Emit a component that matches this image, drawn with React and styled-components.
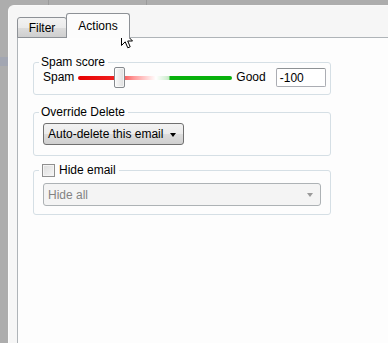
import React from 'react';
import styled, { createGlobalStyle } from 'styled-components';

/* Global */

const GlobalStyle = createGlobalStyle`
  html, body {
    margin: 0;
    padding: 0;
    background: #adadad;
  }
  body {
    font-family: "Liberation Sans", Arial, sans-serif;
    font-size: 12px;
    color: #000;
  }
`

/* Styled Components */

const Screen = styled.div`
  position: relative;
  width: 388px;
  height: 343px;
  overflow: hidden;
  box-sizing: border-box;
  padding: 5px 0 0 8px;
  background:
    linear-gradient(#a2a6b2, #a2a6b2) 0 57px / 8px 9px no-repeat,
    linear-gradient(#9a9a9a, #9a9a9a) 48px 0 / 1px 5px no-repeat,
    linear-gradient(#9a9a9a, #9a9a9a) 146px 0 / 1px 5px no-repeat,
    #adadad;
`

const Window = styled.div`
  height: 100%;
  box-sizing: border-box;
  background: #f6f6f6;
  border-top-left-radius: 6px;
  border-left: 1px solid #fbfbfb;
  border-top: 1px solid #f9f9f9;
  padding: 8px 0 0 8px;
  display: flex;
  flex-direction: column;
`

const TabStrip = styled.div`
  display: flex;
  align-items: flex-end;
  height: 24px;
  position: relative;
  z-index: 1;
  margin-bottom: -1px;
`

const Tab = styled.div`
  box-sizing: border-box;
  height: ${p => (p.$active ? '25px' : '21px')};
  width: ${p => p.$width}px;
  margin-left: ${p => (p.$active ? '-1px' : '0')};
  border: 1px solid #8d9196;
  border-bottom: ${p => (p.$active ? 'none' : '1px solid #8d9196')};
  border-radius: 3px 3px 0 0;
  background: ${p =>
    p.$active
      ? '#fcfcfc'
      : 'linear-gradient(#f3f3f3, #ebebeb 50%, #dddddd 51%, #cfcfcf)'};
  display: flex;
  align-items: center;
  justify-content: center;
  padding-top: ${p => (p.$active ? '0' : '1px')};
`

const TabBody = styled.div`
  flex: 1;
  background: #fdfdfd;
  border-top: 1px solid #afb4b8;
  border-left: 1px solid #afb4b8;
  padding: 17px 0 0 15px;
  display: flex;
  flex-direction: column;
`

const Group = styled.fieldset`
  box-sizing: border-box;
  width: 298px;
  margin: ${p => p.$top || 0}px 0 0 0;
  padding: 0 9px ${p => p.$bottom}px 9px;
  border: 1px solid #d5dfe5;
  border-radius: 3px;
  min-width: 0;
`

const Legend = styled.legend`
  margin-left: -4px;
  padding: 0 3px 0 2px;
  line-height: 14px;
  height: 14px;
  display: flex;
  align-items: center;
  gap: 4px;
`

const SliderRow = styled.div`
  display: flex;
  align-items: center;
  height: 21px;
  margin-top: -2px;
  margin-right: -6px;
`

const RowLabel = styled.span`
  flex-shrink: 0;
  margin-left: ${p => p.$left || 0}px;
  margin-right: ${p => p.$right || 0}px;
  padding-bottom: 1px;
`

const Slider = styled.div`
  position: relative;
  flex-shrink: 0;
  width: 154px;
  height: 21px;
  display: flex;
  align-items: center;
`

const Track = styled.div`
  width: 100%;
  height: 4px;
  border-radius: 2px;
  background: linear-gradient(
    to right,
    #e60000 0px,
    #f02020 36px,
    #ff9a9a 56px,
    #fff 78px,
    #d6f0d6 88px,
    #c3e8c3 91px,
    #08b00c 92px,
    #08b00c 154px
  );
`

const Thumb = styled.div`
  position: absolute;
  top: 0;
  width: 11px;
  height: 21px;
  box-sizing: border-box;
  border: 1px solid #868a8e;
  border-radius: 2px;
  background: linear-gradient(to right, #fafafa, #ececec 50%, #dedede);
  box-shadow: inset 0 0 0 1px #ffffff99;
`

const ScoreInput = styled.div`
  flex-shrink: 0;
  width: 50px;
  height: 19px;
  box-sizing: border-box;
  border: 1px solid #abadb3;
  border-top-color: #8e9194;
  border-radius: 2px;
  background: #fff;
  padding: 0 3px;
  display: flex;
  align-items: center;
`

const Combo = styled.div`
  box-sizing: border-box;
  width: ${p => p.$width}px;
  height: ${p => p.$height}px;
  margin-top: ${p => p.$top}px;
  border: 1px solid ${p => (p.$disabled ? '#adb2b5' : '#707070')};
  border-radius: 3px;
  background: ${p =>
    p.$disabled
      ? '#f4f4f4'
      : 'linear-gradient(#f2f2f2, #ebebeb 50%, #dddddd 51%, #cfcfcf)'};
  color: ${p => (p.$disabled ? '#838383' : '#000')};
  display: flex;
  align-items: center;
  justify-content: space-between;
  padding: 0 7px 0 4px;
`

const Arrow = styled.span`
  width: 0;
  height: 0;
  border-left: 3.5px solid transparent;
  border-right: 3.5px solid transparent;
  border-top: 4px solid ${p => (p.$disabled ? '#9a9a9a' : '#000')};
  margin-top: 1px;
`

const CheckBox = styled.span`
  width: 13px;
  height: 13px;
  box-sizing: border-box;
  border: 1px solid #8f8f8f;
  background: linear-gradient(135deg, #dcdcdc, #f6f6f6);
  box-shadow: inset 0 0 0 1px #f4f4f4;
  margin-left: 1px;
`

const Cursor = styled.svg`
  position: absolute;
  left: 121px;
  top: 29px;
`

/* Component */

const score = -100;
const thumbLeft = 36;

export default function App() {
  return (
    <>
      <GlobalStyle />
      <Screen>
        <Window>
          <TabStrip>
            <Tab $width={50}>Filter</Tab>
            <Tab $active $width={64}>Actions</Tab>
          </TabStrip>
          <TabBody>
            <Group $bottom={6}>
              <Legend>Spam score</Legend>
              <SliderRow>
                <RowLabel $right={4}>Spam</RowLabel>
                <Slider>
                  <Track />
                  <Thumb style={{ left: thumbLeft }} />
                </Slider>
                <RowLabel $left={4} $right={10}>Good</RowLabel>
                <ScoreInput>{score}</ScoreInput>
              </SliderRow>
            </Group>

            <Group $top={10} $bottom={10}>
              <Legend>Override Delete</Legend>
              <Combo $width={141} $height={22} $top={4}>
                <span>Auto-delete this email</span>
                <Arrow />
              </Combo>
            </Group>

            <Group $top={7} $bottom={8}>
              <Legend>
                <CheckBox />
                <span>Hide email</span>
              </Legend>
              <Combo $disabled $width={278} $height={23} $top={6}>
                <span>Hide all</span>
                <Arrow $disabled />
              </Combo>
            </Group>
          </TabBody>
        </Window>
        <Cursor width="13" height="20" viewBox="0 0 13 20">
          <path
            d="M0.5 0.5 L0.5 16.5 L4.2 12.8 L6.8 18.8 L9.2 17.8 L6.7 12 L11.5 12 Z"
            fill="#fff"
            stroke="#000"
            strokeWidth="1"
            strokeLinejoin="miter"
          />
        </Cursor>
      </Screen>
    </>
  );
}
